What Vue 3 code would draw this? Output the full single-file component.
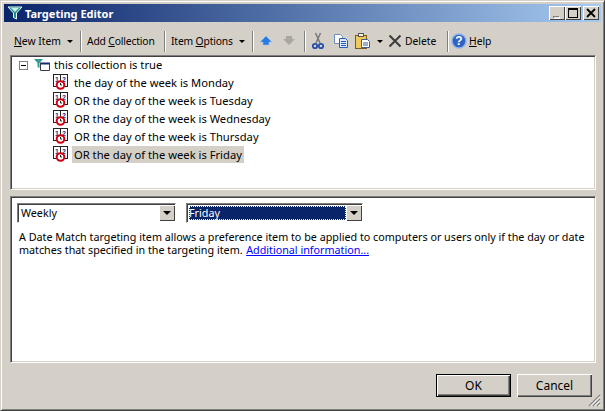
<template>
  <div class="window">
    <div class="titlebar">
      <svg class="title-icon" width="16" height="14" viewBox="0 0 16 14">
        <path d="M1 1h14L9.500 7v6l-3-1.500V7z" fill="#1f8f86" stroke="#e8fbf8" stroke-width="1" />
        <path d="M4 2h8L8 6z" fill="#c6f0ea" />
      </svg>
      <span class="title-text">Targeting Editor</span>
      <div class="caption-buttons">
        <button class="cap-btn disabled"><svg width="16" height="14"><rect x="4" y="10" width="6" height="2" fill="#808080" /><rect x="5" y="11" width="6" height="2" fill="#fff" opacity=".8" /></svg></button>
        <button class="cap-btn"><svg width="16" height="14"><path d="M3 2h10v10H3zM4 4v7h8V4z" fill="#000" fill-rule="evenodd" /></svg></button>
        <button class="cap-btn close"><svg width="16" height="14"><path d="M4 3l8 8M12 3l-8 8" stroke="#000" stroke-width="1.800" /></svg></button>
      </div>
    </div>

    <div class="toolbar">
      <button class="tool t1"><span><u>N</u>ew Item</span><i class="caret"></i></button>
      <span class="sep"></span>
      <button class="tool t2"><span>Add <u>C</u>ollection</span></button>
      <span class="sep"></span>
      <button class="tool t3"><span>Item <u>O</u>ptions</span><i class="caret"></i></button>
      <span class="sep"></span>
      <svg class="tool-icon up" width="16" height="14" viewBox="0 0 16 14"><path d="M8 2l6 6h-3v3H5V8H2z" fill="#2a7be0" stroke="#9cc4f2" stroke-width=".6" /></svg>
      <svg class="tool-icon down" width="16" height="14" viewBox="0 0 16 14"><path d="M5 2h6v3h3l-6 6-6-6h3z" fill="#a8a8a0" /></svg>
      <span class="sep s4"></span>
      <svg class="tool-icon cut" width="16" height="18" viewBox="0 0 16 18">
        <path d="M5.500 1l4.500 10M10.500 1L6 11" stroke="#77787c" stroke-width="1.500" />
        <circle cx="5" cy="14" r="2.200" fill="none" stroke="#274fa8" stroke-width="1.800" />
        <circle cx="11" cy="14" r="2.200" fill="none" stroke="#274fa8" stroke-width="1.800" />
      </svg>
      <svg class="tool-icon copy" width="16" height="16" viewBox="0 0 16 16">
        <path d="M1.500 1.500h6l2 2v7h-8z" fill="#fff" stroke="#6e8fc4" />
        <path d="M6.500 5.500h6l2 2v7h-8z" fill="#dbe8fa" stroke="#2a5cb0" />
        <path d="M8 8.500h5M8 10.500h5M8 12.500h5" stroke="#2a5cb0" />
      </svg>
      <svg class="tool-icon paste" width="18" height="18" viewBox="0 0 18 18">
        <rect x="1.500" y="3.500" width="11" height="13" fill="#eec95e" stroke="#7a5c20" />
        <rect x="4.500" y="1.500" width="5" height="3" fill="#f6f0d8" stroke="#555" />
        <path d="M7.500 7.500h6l2 2v6h-8z" fill="#fff" stroke="#3d5f96" />
        <path d="M9 11h5M9 13h5" stroke="#3d5f96" />
      </svg>
      <i class="caret paste-caret"></i>
      <svg class="tool-icon del" width="14" height="14" viewBox="0 0 14 14"><path d="M1.500 1.500l11 11M12.500 1.500l-11 11" stroke="#3b3b3b" stroke-width="2" /></svg>
      <span class="tool-label delete">Delete</span>
      <span class="sep"></span>
      <svg class="tool-icon help" width="16" height="16" viewBox="0 0 16 16">
        <circle cx="8" cy="8" r="7" fill="#2f62c4" stroke="#8fb2ea" stroke-width="1.400" />
        <text x="8" y="12" class="help-q">?</text>
      </svg>
      <span class="tool-label"><u>H</u>elp</span>
    </div>

    <div class="panes">
      <div class="pane tree">
        <div class="root-row">
          <span class="expander"><i></i></span>
          <svg class="root-icon" width="16" height="14" viewBox="0 0 16 14">
            <path d="M0 0h9L5.500 4v5L3.500 8V4z" fill="#2f9c90" />
            <path d="M6 4.500h10" stroke="#1a2a6c" stroke-width="2" />
            <path d="M6.500 4v7.500h9V4" fill="none" stroke="#3a3a4a" />
          </svg>
          <span>this collection is true</span>
        </div>
        <div v-for="(item, i) in items" :key="item" class="item-row">
          <svg class="date-icon" width="15" height="16" viewBox="0 0 15 16">
            <rect x="0.500" y="0.500" width="14" height="12" fill="#fff" stroke="#222" />
            <path d="M7.500 0v12" stroke="#222" />
            <text x="4" y="7.500" class="digit">1</text>
            <text x="11" y="7.500" class="digit">2</text>
            <circle cx="7.500" cy="11" r="3.800" fill="#fff" stroke="#d00010" stroke-width="2" />
            <path d="M7.500 9v2H9" stroke="#222" fill="none" />
          </svg>
          <span class="item-label" :class="{ selected: i === items.length - 1 }">{{ item }}</span>
        </div>
      </div>

      <div class="pane details">
        <div class="combos">
          <div class="combo"><span class="combo-value">Weekly</span><span class="combo-btn"><i></i></span></div>
          <div class="combo focus"><span class="combo-value">Friday</span><span class="combo-btn"><i></i></span></div>
        </div>
        <p class="desc">A Date Match targeting item allows a preference item to be applied to computers or users only if the day or date<br />matches that specified in the targeting item.&nbsp; <a>Additional information...</a></p>
      </div>
    </div>

    <div class="footer">
      <button class="btn default">OK</button>
      <button class="btn">Cancel</button>
      <svg class="grip" width="14" height="14" viewBox="0 0 14 14">
        <path d="M13 2L2 13M13 6l-7 7M13 10l-3 3" stroke="#808080" stroke-width="1.200" />
        <path d="M13 3.500L3.500 13M13 7.500L7.500 13M13 11.500L11.500 13" stroke="#fff" />
      </svg>
    </div>
  </div>
</template>

<script setup>
const items = [
  'the day of the week is Monday',
  'OR the day of the week is Tuesday',
  'OR the day of the week is Wednesday',
  'OR the day of the week is Thursday',
  'OR the day of the week is Friday'
]
</script>

<style>
html, body { margin: 0; background: #d4d0c8; }
</style>

<style scoped>
.window {
  width: 605px;
  height: 411px;
  box-sizing: border-box;
  background: #d4d0c8;
  border: 1px solid;
  border-color: #d4d0c8 #404040 #404040 #d4d0c8;
  box-shadow: inset 1px 1px 0 #fff, inset -1px -1px 0 #808080;
  padding: 3px;
  display: flex;
  flex-direction: column;
  font-family: "Noto Sans", "Liberation Sans", sans-serif;
  font-size: 11px;
  color: #000;
}
.titlebar {
  height: 18px;
  flex: none;
  display: flex;
  align-items: center;
  background: linear-gradient(90deg, #0a246a, #a6caf0);
  padding-left: 3px;
  padding-right: 2px;
}
.title-icon { margin-right: 2px; }
.title-text {
  color: #fff;
  font-weight: 700;
  font-size: 11px;
}
.caption-buttons { margin-left: auto; display: flex; }
.cap-btn {
  width: 16px;
  height: 14px;
  padding: 0;
  border: 0;
  background: #d4d0c8;
  box-shadow: inset 1px 1px 0 #fff, inset -1px -1px 0 #404040;
}
.cap-btn svg { display: block; }
.cap-btn.close { margin-left: 2px; }
.toolbar {
  height: 33px;
  flex: none;
  display: flex;
  align-items: center;
  padding-left: 10px;
  padding-top: 5px;
  box-sizing: border-box;
  font-size: 10.3px;
}
.tool {
  display: flex;
  align-items: center;
  background: none;
  border: 0;
  font: inherit;
  padding: 0;
  flex: none;
}
.t1 { width: 66px; }
.t2 { width: 82px; padding-left: 5px; letter-spacing: -0.15px; }
.t3 { width: 86px; padding-left: 5px; letter-spacing: -0.15px; }
.caret {
  display: inline-block;
  flex: none;
  width: 0;
  height: 0;
  border-left: 3px solid transparent;
  border-right: 3px solid transparent;
  border-top: 3px solid #000;
  margin-left: 6px;
}
.sep {
  flex: none;
  width: 1px;
  height: 21px;
  background: #808080;
  border-right: 1px solid #fff;
}
.tool-icon { flex: none; }
.up { margin-left: 4px; }
.down { margin-left: 7px; }
.s4 { margin-left: 7px; }
.cut { margin-left: 4px; }
.copy { margin-left: 7px; }
.paste { margin-left: 5px; }
.paste-caret { margin-left: 5px; }
.del { margin-left: 5px; margin-right: 3px; }
.tool-label { flex: none; }
.delete { width: 42px; }
.help { margin-left: 2px; margin-right: 2px; }
.help-q { fill: #fff; font-size: 12px; font-weight: 700; text-anchor: middle; font-family: "Liberation Sans", sans-serif; }
.panes {
  flex: none;
  margin-left: 6px;
  margin-right: 5px;
  display: flex;
  flex-direction: column;
  gap: 6px;
}
.pane {
  box-sizing: border-box;
  background: #fff;
  border: 1px solid;
  border-color: #808080 #fff #fff #808080;
  box-shadow: inset 1px 1px 0 #404040, inset -1px -1px 0 #d4d0c8;
}
.tree { height: 135px; padding: 0 0 0 8px; font-size: 11.2px; }
.root-row { display: flex; align-items: center; height: 17px; }
.expander {
  width: 9px;
  height: 9px;
  box-sizing: border-box;
  border: 1px solid #808080;
  display: flex;
  align-items: center;
  justify-content: center;
  margin-right: 6px;
  margin-top: 2px;
}
.expander i { width: 5px; height: 1px; background: #000; }
.root-icon { margin-right: 4px; margin-top: 2px; }
.item-row { display: flex; align-items: center; height: 18px; padding-left: 34px; }
.date-icon { margin-right: 5px; flex: none; }
.item-label { padding: 1px 2px; line-height: 15px; margin-left: -1px; }
.item-label.selected { background: #d4d0c8; }
.digit { fill: #1c2f8c; font-size: 7px; font-weight: 700; text-anchor: middle; font-family: "Liberation Sans", sans-serif; }
.details { height: 167px; padding: 6px 5px 0 6px; font-size: 10.75px; }
.combos { display: flex; gap: 10px; }
.combo {
  box-sizing: border-box;
  width: 159px;
  height: 20px;
  display: flex;
  background: #fff;
  border: 1px solid;
  border-color: #808080 #fff #fff #808080;
  box-shadow: inset 1px 1px 0 #404040;
  padding: 1px 0 1px 2px;
}
.combo + .combo { width: 177px; }
.combo-value { flex: 1; line-height: 16px; padding-left: 1px; }
.combo.focus .combo-value {
  background: #0a246a;
  color: #fff;
  outline: 1px dotted #fff;
  outline-offset: -1px;
  margin: 1px 0;
  line-height: 14px;
  padding-left: 0;
}
.combo-btn {
  width: 16px;
  background: #d4d0c8;
  box-shadow: inset 1px 1px 0 #fff, inset -1px -1px 0 #404040;
  display: flex;
  align-items: center;
  justify-content: center;
}
.combo-btn i {
  width: 0;
  height: 0;
  border-left: 4px solid transparent;
  border-right: 4px solid transparent;
  border-top: 4px solid #000;
}
.desc {
  margin: 8px 0 0 2px;
  line-height: 13px;
  white-space: nowrap;
}
.desc a { color: #0000ff; text-decoration: underline; margin-left: -2px; }
.footer {
  flex: 1;
  position: relative;
  display: flex;
  justify-content: flex-end;
  gap: 6px;
  padding: 11px 9px 0 0;
}
.btn {
  width: 75px;
  height: 23px;
  padding: 0;
  font: inherit;
  font-size: 12px;
  background: #d4d0c8;
  border: 0;
  box-shadow: inset 1px 1px 0 #fff, inset -1px -1px 0 #404040, inset -2px -2px 0 #808080;
}
.btn.default {
  box-shadow: inset 0 0 0 1px #000, inset 2px 2px 0 #fff, inset -2px -2px 0 #404040, inset -3px -3px 0 #808080;
}
.grip { position: absolute; right: 0; bottom: 0; }
</style>
